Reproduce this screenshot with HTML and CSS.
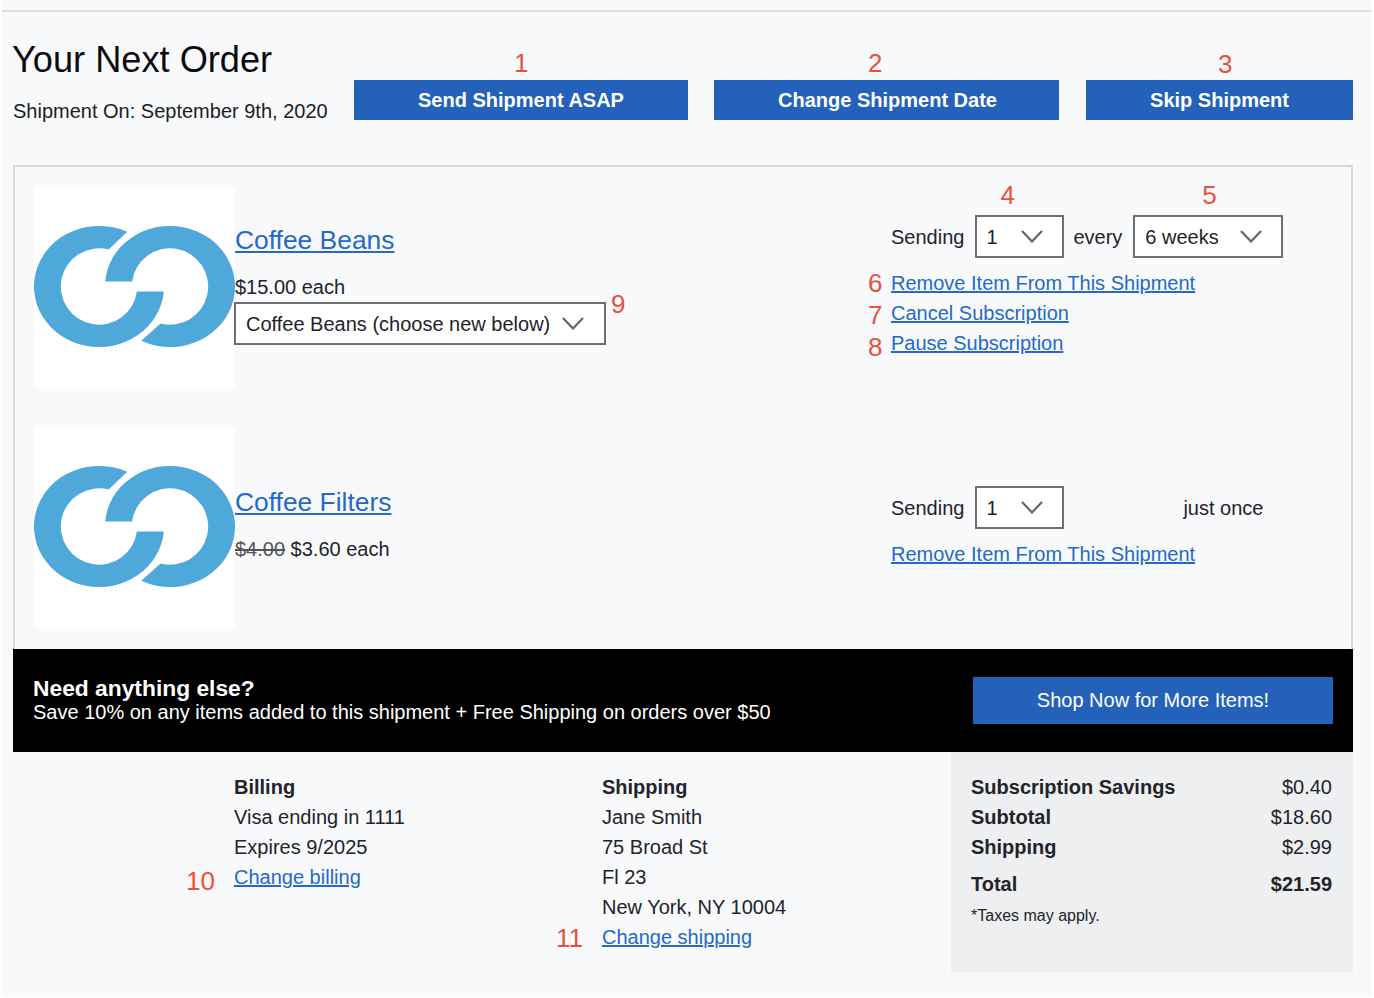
FILE: index.html
```html
<!DOCTYPE html>
<html lang="en">
<head>
<meta charset="utf-8">
<title>Your Next Order</title>
<link rel="stylesheet" href="styles.css">
</head>
<body>
<svg class="defs" width="0" height="0" aria-hidden="true">
  <symbol id="logo" viewBox="0 1 200 200">
    <path d="M92.7 45.64A64.7 60.3 0 1 0 129.18 105H102.37A38 38 0 1 1 74.3 63.23Z"/>
    <path d="M70.82 95H97.63A38 38 0 1 1 126 136.84L106.7 154.09A64.7 60.3 0 1 0 70.82 95Z"/>
  </symbol>
  <symbol id="chev" viewBox="0 0 22 13">
    <path d="M1 1L11 11.5L21 1" fill="none" stroke="#666" stroke-width="2.2"/>
  </symbol>
</svg>
<main class="page">
  <header class="head">
    <div class="head-text">
      <h1>Your Next Order</h1>
      <p>Shipment On: September 9th, 2020</p>
    </div>
    <div class="actions">
      <a class="btn btn-a"><span class="note n1">1</span>Send Shipment ASAP</a>
      <a class="btn btn-b"><span class="note n2">2</span>Change Shipment Date</a>
      <a class="btn btn-c"><span class="note n3">3</span>Skip Shipment</a>
    </div>
  </header>

  <section class="card">
    <article class="item">
      <div class="product">
        <svg class="thumb"><use href="#logo"/></svg>
        <div class="info">
          <a class="title">Coffee Beans</a>
          <div class="price">$15.00 each</div>
          <div class="box box-wide"><span>Coffee Beans (choose new below)</span><svg class="chev"><use href="#chev"/></svg><span class="note n9">9</span></div>
        </div>
      </div>
      <div class="controls">
        <div class="send">
          <span>Sending</span>
          <div class="box box-qty"><span>1</span><svg class="chev"><use href="#chev"/></svg><span class="note n4">4</span></div>
          <span>every</span>
          <div class="box box-freq"><span>6 weeks</span><svg class="chev"><use href="#chev"/></svg><span class="note n5">5</span></div>
        </div>
        <ul class="links">
          <li><span class="note n6">6</span><a>Remove Item From This Shipment</a></li>
          <li><span class="note n7">7</span><a>Cancel Subscription</a></li>
          <li><span class="note n8">8</span><a>Pause Subscription</a></li>
        </ul>
      </div>
    </article>

    <article class="item item-two">
      <div class="product">
        <svg class="thumb"><use href="#logo"/></svg>
        <div class="info">
          <a class="title">Coffee Filters</a>
          <div class="price"><s>$4.00</s> $3.60 each</div>
        </div>
      </div>
      <div class="controls">
        <div class="send">
          <span>Sending</span>
          <div class="box box-qty"><span>1</span><svg class="chev"><use href="#chev"/></svg></div>
          <span class="once">just once</span>
        </div>
        <ul class="links">
          <li><a>Remove Item From This Shipment</a></li>
        </ul>
      </div>
    </article>
  </section>

  <section class="band">
    <div class="band-text">
      <strong>Need anything else?</strong>
      <p>Save 10% on any items added to this shipment + Free Shipping on orders over $50</p>
    </div>
    <a class="shop">Shop Now for More Items!</a>
  </section>

  <section class="foot">
    <div class="addr addr-bill">
      <b>Billing</b>
      <span>Visa ending in 1111</span>
      <span>Expires 9/2025</span>
      <a><span class="note n10">10</span>Change billing</a>
    </div>
    <div class="addr addr-ship">
      <b>Shipping</b>
      <span>Jane Smith</span>
      <span>75 Broad St</span>
      <span>Fl 23</span>
      <span>New York, NY 10004</span>
      <a><span class="note n11">11</span>Change shipping</a>
    </div>
    <div class="summary">
      <div class="row"><b>Subscription Savings</b><span>$0.40</span></div>
      <div class="row"><b>Subtotal</b><span>$18.60</span></div>
      <div class="row"><b>Shipping</b><span>$2.99</span></div>
      <div class="row row-total"><b>Total</b><b>$21.59</b></div>
      <small>*Taxes may apply.</small>
    </div>
  </section>
</main>
</body>
</html>
```
FILE: styles.css
```css
* { box-sizing: border-box; }
html, body { margin: 0; padding: 0; background: #fff; }
body { font-family: "Liberation Sans", Arial, sans-serif; font-size: 20px; line-height: 30px; color: #23232b; }
.defs { position: absolute; }
a { color: #2469c8; text-decoration: underline; }

.page { width: 1370px; height: 996px; margin-left: 2px; padding: 10px 19px 0 11px; background: #f8f9fb; overflow: hidden; }
.page::before { content: ""; display: block; height: 2px; margin: 0 -18px 0 -11px; background: #dcdde0; }

.note { position: absolute; font-size: 26px; line-height: 30px; color: #e8503f; font-weight: 400; text-decoration: none; display: inline-block; white-space: nowrap; }

.head { display: flex; height: 153px; }
.head-text { width: 341px; padding-top: 28px; }
.head-text h1 { margin: 0 0 16px -1px; font-size: 36.2px; line-height: 40px; font-weight: 400; color: #0b0b10; }
.head-text p { margin: 0; color: #1d1d22; }
.actions { display: flex; height: 40px; margin-top: 68px; }
.btn { position: relative; display: block; height: 40px; background: #2461ba; color: #fff; font-weight: 700; text-align: center; line-height: 40px; text-decoration: none; }
.btn-a { width: 334px; }
.btn-b { width: 345px; margin-left: 26px; padding-left: 2px; }
.btn-c { width: 267px; margin-left: 27px; }
.n1 { left: 160px; top: -32px; }
.n2 { left: 154px; top: -32px; }
.n3 { left: 132px; top: -31px; }

.card { height: 484px; border: 2px solid #d8d9dc; border-bottom: 0; padding: 20px 0 0 19px; }
.item { display: flex; height: 201px; }
.item-two { margin-top: 39px; }
.product { display: flex; width: 857px; }
.thumb { width: 201px; height: 201px; background: #fff; fill: #4ea8da; flex: none; }
.info { padding-top: 38px; }
.item-two .info { padding-top: 60px; }
.title { display: block; font-size: 26.4px; line-height: 30px; width: fit-content; margin-bottom: 17px; }
.price { margin-bottom: 0; line-height: 30px; }
.price s { color: #555; }

.box { position: relative; display: flex; align-items: center; justify-content: space-between; height: 43px; background: #fff; border: 2px solid #6f6f73; padding-left: 10px; }
.box-wide { width: 372px; margin-left: -1px; padding-right: 20px; }
.box-qty { width: 89px; padding-left: 9px; padding-right: 19px; }
.box-freq { width: 150px; padding-right: 19px; }
.chev { width: 22px; height: 13px; flex: none; }
.n9 { left: 375px; top: -15px; }
.n4 { left: 23px; top: -37px; }
.n5 { left: 67px; top: -37px; }

.controls { padding-top: 28px; }
.item-two .controls { padding-top: 59px; }
.send { display: flex; align-items: center; height: 43px; }
.send .box { margin: 0 9px 0 11px; }
.once { margin-left: 110px; }
.links { list-style: none; margin: 10px 0 0; padding: 0; }
.links li { position: relative; height: 30px; }
.n6 { left: -23px; top: 0; }
.n7 { left: -23px; top: 2px; }
.n8 { left: -23px; top: 4px; }

.band { display: flex; align-items: center; justify-content: space-between; height: 103px; padding: 0 20px; background: #000; color: #fff; line-height: 24px; }
.band-text { margin-top: -2px; }
.band strong { display: block; font-size: 22.8px; }
.band p { margin: 0; }
.shop { display: block; width: 360px; height: 47px; background: #2461ba; color: #fff; text-align: center; line-height: 46px; text-decoration: none; }

.foot { display: flex; height: 221px; }
.addr { display: flex; flex-direction: column; align-items: flex-start; padding-top: 20px; }
.addr-bill { width: 368px; margin-left: 221px; }
.addr-ship { width: 349px; }
.addr a { position: relative; }
.n10 { left: -48px; top: 4px; }
.n11 { left: -46px; top: 1px; }
.summary { width: 402px; height: 220px; padding: 20px 21px 0 20px; background: #eeeff1; }
.row { display: flex; justify-content: space-between; height: 30px; }
.row-total { margin-top: 7px; }
.summary small { display: block; margin-top: 2px; font-size: 16px; line-height: 30px; }
```
